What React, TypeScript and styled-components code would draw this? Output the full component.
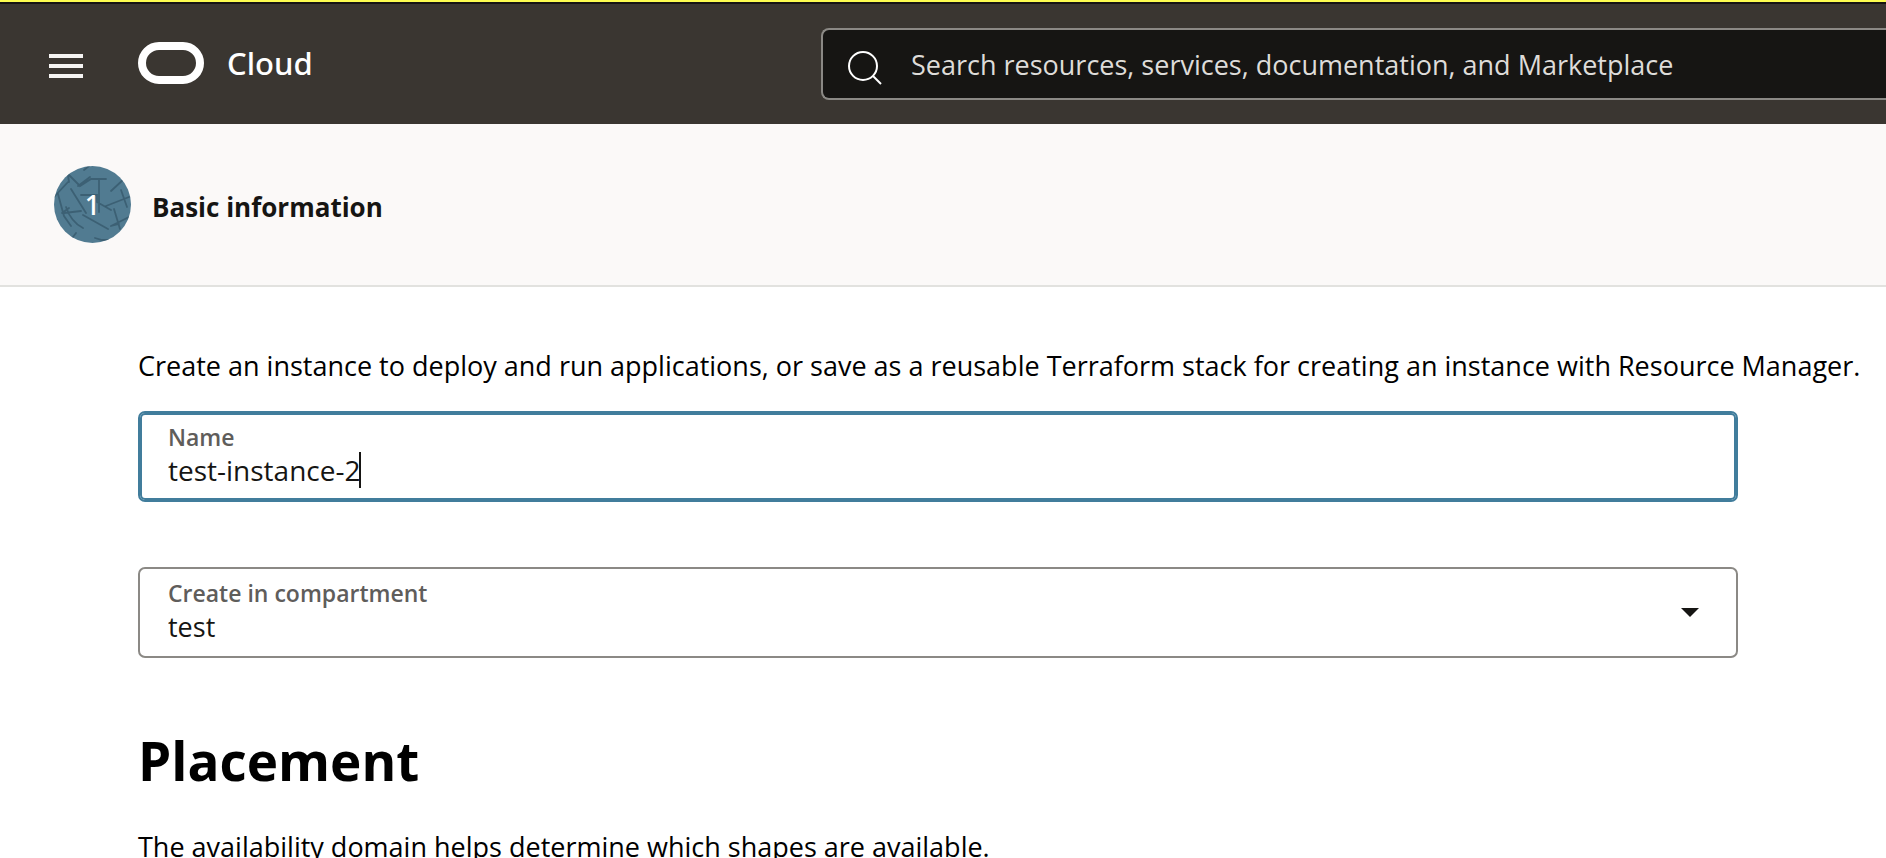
import React, { useState } from "react";
import styled, { createGlobalStyle } from "styled-components";

const GlobalStyle = createGlobalStyle`
  *, *::before, *::after { box-sizing: border-box; }
  html, body { margin: 0; }
  body {
    background: #fff;
    color: #000;
    font-family: "Open Sans", "Noto Sans", sans-serif;
    font-size: 27px;
    line-height: 36px;
  }
`;

const Page = styled.div`
  height: 100vh;
  overflow: hidden;
`;

const Header = styled.header`
  display: grid;
  grid-template-columns: 821px minmax(0, 1fr);
  align-items: center;
  height: 124px;
  padding-top: 4px;
  background: linear-gradient(#fdfd50 0 2px, #161513 2px 4px, #3a3631 4px);
`;

const Brand = styled.div`
  display: flex;
  align-items: center;
  padding: 0 0 2px 49px;
`;

const MenuButton = styled.button`
  display: flex;
  margin: 6px 55px 0 0;
  padding: 0;
  border: 0;
  background: none;
`;

const HomeLink = styled.a`
  display: flex;
  align-items: center;
  gap: 23px;
  color: #fff;
  font-family: "Noto Sans", sans-serif;
  font-size: 31px;
  font-weight: 500;
  text-decoration: none;
`;

const Search = styled.label`
  display: flex;
  align-items: center;
  gap: 29px;
  height: 72px;
  padding: 2px 0 0 25px;
  border: 2px solid #8b8985;
  border-right: 0;
  border-radius: 8px 0 0 8px;
  background: #161513;
`;

const SearchIcon = styled.svg`
  margin-top: 6px;
`;

const SearchInput = styled.input`
  flex: 1;
  min-width: 0;
  padding: 0;
  border: 0;
  outline: 0;
  background: none;
  color: #fff;
  font: inherit;
  &::placeholder { color: #dedcd9; opacity: 1; }
`;

const Steps = styled.nav`
  height: 163px;
  padding: 42px 54px;
  border-bottom: 2px solid #e2e2df;
  background: #fbf9f8;
`;

const Step = styled.div`
  display: flex;
  align-items: center;
  gap: 21px;
  color: #161513;
  font-weight: 700;
`;

const StepBadge = styled.span`
  display: grid;
  place-items: center;
  width: 77px;
  height: 77px;
  color: #fff;
  font-family: "Noto Sans", sans-serif;
  font-weight: 500;
  > * { grid-area: 1 / 1; }
`;

const StepLabel = styled.span`
  padding-top: 4px;
  font-size: 26px;
`;

const Main = styled.main`
  padding: 61px 16px 0 138px;
`;

const Text = styled.p`
  margin: 0;
`;

const Fields = styled.div`
  display: grid;
  gap: 65px;
  max-width: 1600px;
  margin-top: 27px;
`;

const Field = styled.div<{ $active?: boolean }>`
  display: flex;
  flex-direction: column;
  position: relative;
  height: 91px;
  padding: 11px 28px;
  border: 2px solid ${(p) => (p.$active ? "#417d9c" : "#8b8985")};
  border-radius: 7px;
  box-shadow: ${(p) => (p.$active ? "inset 0 0 0 2px #417d9c" : "none")};
`;

const FieldLabel = styled.label`
  color: #5f5d5b;
  font-size: 23px;
  font-weight: 600;
  line-height: 26px;
`;

const InputRow = styled.div`
  display: flex;
`;

const TextInput = styled.input`
  field-sizing: content;
  max-width: 100%;
  height: 40px;
  padding: 0;
  border: 0;
  outline: 0;
  background: none;
  color: #161513;
  caret-color: transparent;
  font: inherit;
  font-size: 28px;
`;

const Caret = styled.span`
  width: 2px;
  height: 36px;
  margin: 2px 0 0 -2px;
  background: #161513;
`;

const Select = styled.select`
  appearance: none;
  width: 100%;
  height: 40px;
  padding: 2px 0 0;
  border: 0;
  outline: 0;
  background: none;
  color: #161513;
  font: inherit;
`;

const Arrow = styled.svg`
  position: absolute;
  top: 39px;
  right: 37px;
  pointer-events: none;
`;

const Heading = styled.h2`
  margin: 67px 0 32px;
  font-size: 53px;
  font-weight: 700;
  line-height: 72px;
`;

function StepTexture() {
  return (
    <svg width="77" height="77" viewBox="0 0 77 77" aria-hidden="true">
      <defs>
        <clipPath id="disc"><circle cx="38.5" cy="38.5" r="38.5" /></clipPath>
      </defs>
      <g clipPath="url(#disc)">
        <rect width="77" height="77" fill="#517b91" />
        <g fill="none" stroke="#335568" strokeOpacity=".7" strokeWidth="1.8" strokeLinecap="round">
          <path d="M0 31 14 16M14 8 26 20 37 13H52M15 16l-1-7M24 20l12-9M17 23 32 47M45 13v33M27 29h16v7l14 8" />
          <path d="M57 25 70 13M52 40 75 31M67 24l6 17M4 28l6 22 7 10M8 47l7-5M10 47l17-2M12 41q5 15 17 21" />
          <path d="M29 49 54 63M60 43l6 20M57 60 77 50M57 60l8-2M19 71l3-4M41 72l7 2h10M30 4l5-4" />
        </g>
      </g>
    </svg>
  );
}

export default function App() {
  const [name, setName] = useState("test-instance-2");
  return (
    <>
      <GlobalStyle />
      <Page>
        <Header>
          <Brand>
            <MenuButton type="button" aria-label="Navigation menu">
              <svg width="34" height="24" viewBox="0 0 34 24" aria-hidden="true">
                <path d="M0 2h34M0 12h34M0 22h34" stroke="#f5f4f2" strokeWidth="4" />
              </svg>
            </MenuButton>
            <HomeLink href="#">
              <svg width="66" height="42" viewBox="0 0 66 42" aria-hidden="true">
                <rect x="4" y="4" width="58" height="34" rx="17" fill="none" stroke="#fff" strokeWidth="8" />
              </svg>
              Cloud
            </HomeLink>
          </Brand>
          <Search>
            <SearchIcon width="34" height="34" viewBox="0 0 34 34" fill="none" stroke="#fff" strokeWidth="2" aria-hidden="true">
              <circle cx="15" cy="15" r="14" />
              <path d="m25 25 8 8" />
            </SearchIcon>
            <SearchInput
              type="search"
              aria-label="Search"
              placeholder="Search resources, services, documentation, and Marketplace"
            />
          </Search>
        </Header>
        <Steps aria-label="Progress">
          <Step aria-current="step">
            <StepBadge>
              <StepTexture />
              <span>1</span>
            </StepBadge>
            <StepLabel>Basic information</StepLabel>
          </Step>
        </Steps>
        <Main>
          <Text>
            Create an instance to deploy and run applications, or save as a reusable Terraform stack for creating an instance with Resource Manager.
          </Text>
          <Fields>
            <Field $active>
              <FieldLabel htmlFor="name">Name</FieldLabel>
              <InputRow>
                <TextInput id="name" type="text" value={name} onChange={(e) => setName(e.target.value)} />
                <Caret />
              </InputRow>
            </Field>
            <Field>
              <FieldLabel htmlFor="compartment">Create in compartment</FieldLabel>
              <Select id="compartment" defaultValue="test">
                <option value="test">test</option>
              </Select>
              <Arrow width="18" height="9" viewBox="0 0 18 9" aria-hidden="true">
                <path d="M0 0h18L9 9z" fill="#161513" />
              </Arrow>
            </Field>
          </Fields>
          <Heading>Placement</Heading>
          <Text>The availability domain helps determine which shapes are available.</Text>
        </Main>
      </Page>
    </>
  );
}
